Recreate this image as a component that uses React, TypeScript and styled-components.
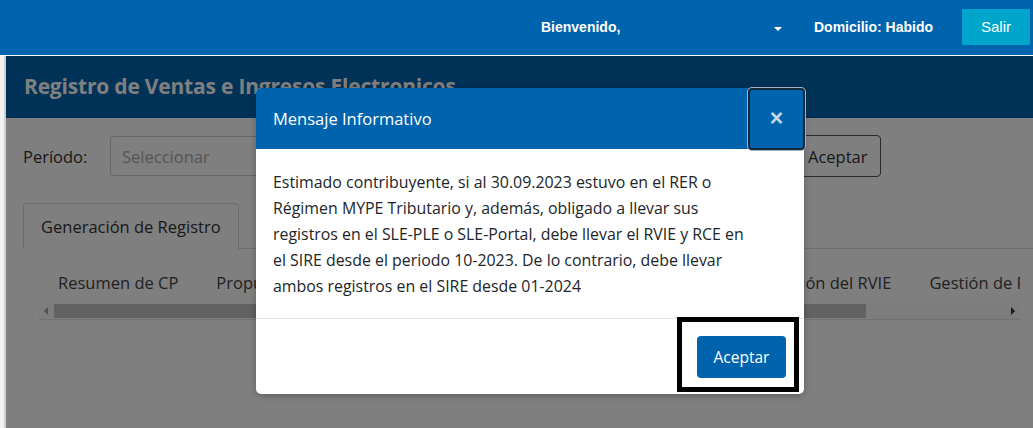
import React from 'react';
import styled, { createGlobalStyle } from 'styled-components';

const GlobalStyle = createGlobalStyle`
  html, body {
    margin: 0;
    padding: 0;
    background: #ffffff;
    overflow: hidden;
  }
  * {
    box-sizing: border-box;
  }
`;

const Page = styled.div`
  position: relative;
  width: 1033px;
  height: 428px;
  font-family: 'Open Sans', 'Noto Sans', sans-serif;
  color: #444;
`;

const Navbar = styled.div`
  position: relative;
  z-index: 20;
  height: 56px;
  background: #0063ae;
  border-bottom: 1px solid #ffffff;
  display: flex;
  align-items: center;
  justify-content: flex-end;
  padding-right: 3px;
  font-family: 'Liberation Sans', Arial, sans-serif;
  color: #ffffff;
`;

const Welcome = styled.div`
  width: 241px;
  display: flex;
  align-items: center;
  justify-content: space-between;
  font-size: 14px;
  font-weight: bold;
  margin-right: 32px;
  margin-top: -2px;
`;

const Caret = styled.span`
  width: 0;
  height: 0;
  border-left: 4px solid transparent;
  border-right: 4px solid transparent;
  border-top: 4px solid #ffffff;
  margin-top: 4px;
`;

const Domicilio = styled.div`
  font-size: 14px;
  font-weight: bold;
  margin-right: 29px;
  margin-top: -2px;
`;

const SalirButton = styled.button`
  width: 68px;
  height: 36px;
  margin-top: -2px;
  border: none;
  background: #00a5cc;
  color: #ffffff;
  font-family: 'Liberation Sans', Arial, sans-serif;
  font-size: 15px;
`;

const Body = styled.div`
  display: flex;
  height: 372px;
`;

const Rail = styled.div`
  flex-shrink: 0;
  width: 6px;
  background: #f2f2f2;
  border-right: 2px solid #cfcfcf;
`;

const Main = styled.div`
  flex: 1;
  min-width: 0;
  display: flex;
  flex-direction: column;
`;

const PanelHeader = styled.div`
  height: 62px;
  background: #0062ae;
  display: flex;
  align-items: center;
  padding-left: 18px;
  padding-bottom: 2px;
`;

const PanelTitle = styled.h1`
  margin: 0;
  font-size: 21px;
  font-weight: bold;
  color: #ffffff;
  letter-spacing: -0.2px;
`;

const Content = styled.div`
  padding: 17px 0 0 17px;
`;

const FilterRow = styled.div`
  display: flex;
  align-items: center;
  height: 42px;
`;

const Label = styled.span`
  font-size: 16.5px;
  color: #333;
  width: 87px;
`;

const Select = styled.div`
  width: 670px;
  height: 40px;
  border: 1px solid #cccccc;
  border-radius: 4px;
  padding-left: 11px;
  display: flex;
  align-items: center;
  font-size: 16.5px;
  color: #aaaaaa;
`;

const OutlineButton = styled.button`
  margin-left: 15px;
  height: 42px;
  padding: 0 12px;
  background: transparent;
  border: 1px solid #555;
  border-radius: 4px;
  font-family: 'Open Sans', 'Noto Sans', sans-serif;
  font-size: 16.5px;
  color: #333;
`;

const TabBar = styled.div`
  display: flex;
  margin-top: 26px;
  border-bottom: 1px solid #d8d8d8;
`;

const Tab = styled.div`
  height: 46px;
  padding: 0 17px;
  border: 1px solid #d8d8d8;
  border-bottom: none;
  border-radius: 4px 4px 0 0;
  display: flex;
  align-items: center;
  font-size: 16.5px;
  color: #333;
  margin-bottom: -1px;
  background: #ffffff;
`;

const SubTabs = styled.div`
  margin: 0 13px 0 16px;
  overflow: hidden;
`;

const SubTabRow = styled.div`
  display: flex;
  white-space: nowrap;
  height: 53px;
  align-items: center;
  padding-top: 14px;
`;

const SubTab = styled.span`
  padding: 0 19px;
  font-size: 16.5px;
  color: #444;
`;

const Scrollbar = styled.div`
  height: 18px;
  display: flex;
  align-items: center;
  background: #fafafa;
  border-bottom: 1px solid #e2e2e2;
  padding: 0 5px;
`;

const Arrow = styled.span<{ $dir: 'left' | 'right' }>`
  width: 0;
  height: 0;
  border-top: 4px solid transparent;
  border-bottom: 4px solid transparent;
  ${p => (p.$dir === 'left' ? 'border-right: 4px solid #a0a0a0;' : 'border-left: 4px solid #333;')}
`;

const Track = styled.div`
  flex: 1;
  height: 14px;
  margin: 0 6px;
  display: flex;
`;

const Thumb = styled.div`
  height: 100%;
  background: #c4c4c4;
`;

const Backdrop = styled.div`
  position: absolute;
  z-index: 10;
  top: 56px;
  left: 6px;
  right: 0;
  bottom: 0;
  background: rgba(0, 0, 0, 0.5);
`;

const Modal = styled.div`
  position: absolute;
  z-index: 30;
  top: 88px;
  left: 256px;
  width: 548px;
  background: #ffffff;
  border-radius: 5px;
  box-shadow: 0 2px 6px rgba(0, 0, 0, 0.25);
`;

const ModalHeader = styled.div`
  height: 61px;
  background: #0063ae;
  border-radius: 5px 5px 0 0;
  display: flex;
  align-items: center;
  justify-content: space-between;
  padding-left: 17px;
`;

const ModalTitle = styled.h5`
  margin: 0;
  font-size: 16.5px;
  font-weight: normal;
  color: #ffffff;
`;

const CloseButton = styled.button`
  width: 57px;
  height: 62px;
  margin-right: -1px;
  background: #0063ae;
  border: 2px solid #17283a;
  border-radius: 4px;
  box-shadow: 0 0 0 1px #9fb3c4;
  color: #c4d7ec;
  font-family: 'Liberation Sans', Arial, sans-serif;
  font-size: 23px;
  font-weight: bold;
  line-height: 1;
  padding: 0;
`;

const ModalBody = styled.div`
  padding: 20px 17px 19px;
  font-size: 15.9px;
  line-height: 26px;
  color: #212529;
  border-bottom: 1px solid #dee2e6;
`;

const ModalFooter = styled.div`
  position: relative;
  display: flex;
  justify-content: flex-end;
  padding: 17px 18px 16px;
`;

const PrimaryButton = styled.button`
  width: 89px;
  height: 42px;
  background: #0063ae;
  border: none;
  border-radius: 4px;
  color: #ffffff;
  font-family: 'Open Sans', 'Noto Sans', sans-serif;
  font-size: 15.5px;
`;

const Highlight = styled.div`
  position: absolute;
  left: 421px;
  top: -2px;
  width: 122px;
  height: 75px;
  border: 5px solid #000000;
  pointer-events: none;
`;

const subTabs = [
  'Resumen de CP',
  'Propuesta RVIE',
  'Reemplazo de la Propuesta',
  'Preliminar',
  'Generación del RVIE',
  'Gestión de Registros',
];

export default function App() {
  return (
    <Page>
      <GlobalStyle />
      <Navbar>
        <Welcome>
          <span>Bienvenido,</span>
          <Caret />
        </Welcome>
        <Domicilio>Domicilio: Habido</Domicilio>
        <SalirButton>Salir</SalirButton>
      </Navbar>

      <Body>
        <Rail />
        <Main>
          <PanelHeader>
            <PanelTitle>Registro de Ventas e Ingresos Electronicos</PanelTitle>
          </PanelHeader>
          <Content>
            <FilterRow>
              <Label>Período:</Label>
              <Select>Seleccionar</Select>
              <OutlineButton>Aceptar</OutlineButton>
            </FilterRow>
            <TabBar>
              <Tab>Generación de Registro</Tab>
            </TabBar>
            <SubTabs>
              <SubTabRow>
                {subTabs.map(t => (
                  <SubTab key={t}>{t}</SubTab>
                ))}
              </SubTabRow>
              <Scrollbar>
                <Arrow $dir="left" />
                <Track>
                  <Thumb style={{ width: '85.4%' }} />
                </Track>
                <Arrow $dir="right" />
              </Scrollbar>
            </SubTabs>
          </Content>
        </Main>
      </Body>

      <Backdrop />

      <Modal>
        <ModalHeader>
          <ModalTitle>Mensaje Informativo</ModalTitle>
          <CloseButton>×</CloseButton>
        </ModalHeader>
        <ModalBody>
          Estimado contribuyente, si al 30.09.2023 estuvo en el RER o<br />
          Régimen MYPE Tributario y, además, obligado a llevar sus<br />
          registros en el SLE-PLE o SLE-Portal, debe llevar el RVIE y RCE en<br />
          el SIRE desde el periodo 10-2023. De lo contrario, debe llevar<br />
          ambos registros en el SIRE desde 01-2024
        </ModalBody>
        <ModalFooter>
          <PrimaryButton>Aceptar</PrimaryButton>
          <Highlight />
        </ModalFooter>
      </Modal>
    </Page>
  );
}
